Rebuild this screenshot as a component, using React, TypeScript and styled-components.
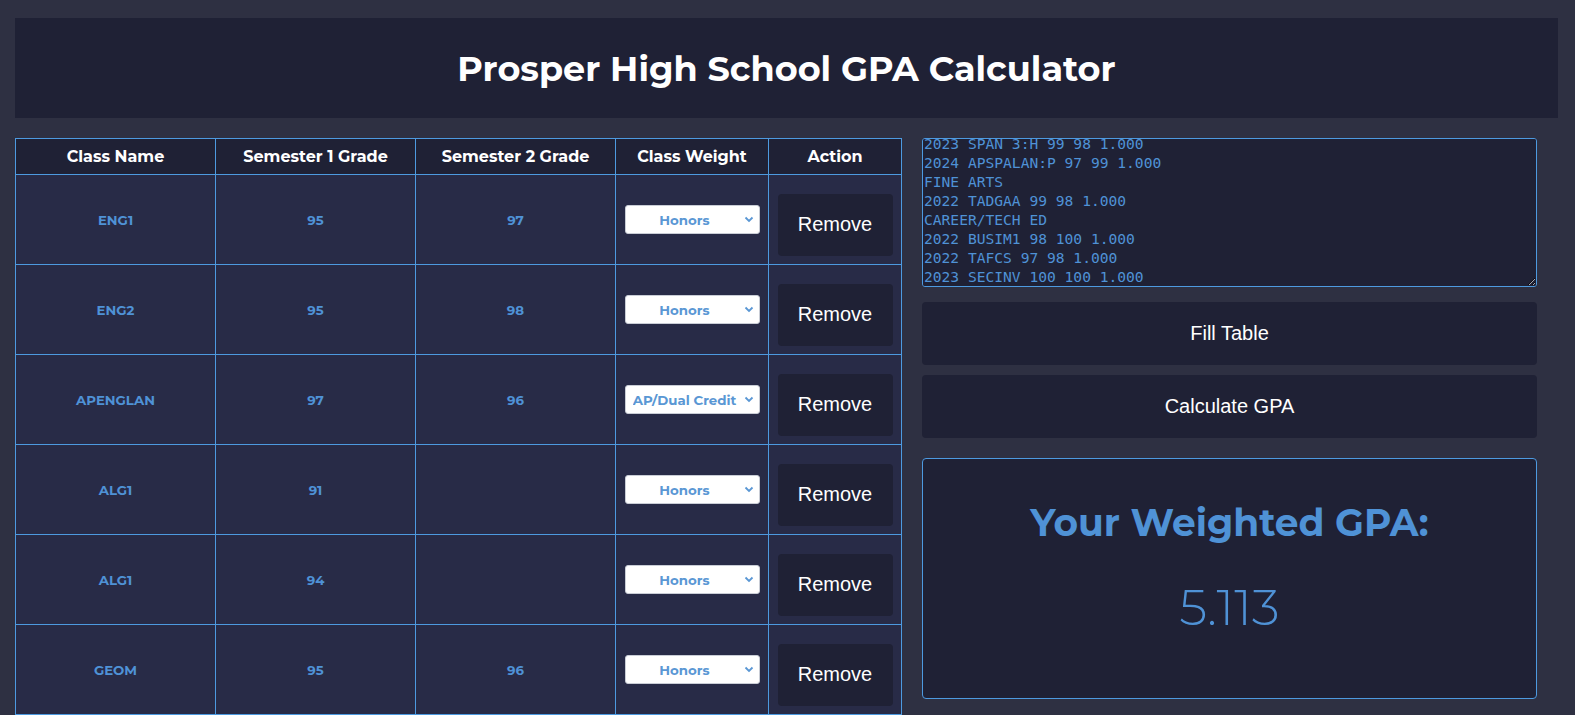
import React, { useEffect, useRef } from "react";
import styled, { createGlobalStyle } from "styled-components";

const GlobalStyle = createGlobalStyle`
  html, body {
    margin: 0;
    padding: 0;
    background: #2e3042;
    overflow: hidden;
  }
  * { box-sizing: border-box; }
`;

const SANS = `"Montserrat", Inter, "Open Sans", sans-serif`;

const Page = styled.div`
  padding: 18px 17px 0 15px;
  display: flex;
  flex-direction: column;
  gap: 20px;
  font-family: ${SANS};
`;

const Header = styled.header`
  height: 100px;
  background: #1f2135;
  display: flex;
  align-items: center;
  justify-content: center;
`;

const Title = styled.h1`
  margin: 0;
  color: #ffffff;
  font-size: 35px;
  font-weight: 700;
`;

const Main = styled.div`
  display: grid;
  grid-template-columns: 886px 615px;
  column-gap: 21px;
  align-items: start;
`;

const Table = styled.table`
  width: 886px;
  table-layout: fixed;
  border-collapse: collapse;
  border: 1px solid #4d9ae0;
`;

const HeadCell = styled.th<{ $w: number }>`
  width: ${(p) => p.$w}px;
  height: 36px;
  padding: 0;
  background: #1f2135;
  color: #ffffff;
  font-size: 16px;
  font-weight: 700;
  border: 1px solid #4d9ae0;
  text-align: center;
`;

const BodyRow = styled.tr`
  height: 90px;
  background: #282b47;
`;

const Cell = styled.td`
  padding: 0 8px;
  border: 1px solid #4d9ae0;
  text-align: center;
  color: #4f92d6;
  font-size: 13.33px;
  font-weight: 700;
`;

const SelectWrap = styled.div`
  position: relative;
  width: 135px;
  height: 29px;
  margin: 0 auto;
`;

const WeightSelect = styled.select`
  width: 100%;
  height: 100%;
  appearance: none;
  background: #ffffff;
  border: 1px solid #c9cdd6;
  border-radius: 3px;
  padding: 0 22px 0 7px;
  color: #5a97d4;
  font-family: ${SANS};
  font-size: 13.33px;
  font-weight: 700;
  text-align: center;
  text-align-last: center;
  outline: none;
`;

const Chevron = styled.svg`
  position: absolute;
  right: 6px;
  top: 11px;
  width: 10px;
  height: 7px;
  pointer-events: none;
`;

const RemoveButton = styled.button`
  width: 115px;
  height: 62px;
  margin: 10px auto 0;
  display: block;
  background: #1f2135;
  border: none;
  border-radius: 4px;
  color: #ffffff;
  font-family: "Liberation Sans", Arial, sans-serif;
  font-size: 20px;
`;

const Side = styled.div`
  display: flex;
  flex-direction: column;
`;

const Transcript = styled.textarea`
  width: 615px;
  height: 149px;
  margin: 0 0 15px 0;
  padding: 2px 4px 0 1px;
  background: #1f2135;
  border: 1px solid #4d9ae0;
  border-radius: 3px;
  color: #4f92d6;
  font-family: "DejaVu Sans Mono", "Liberation Mono", monospace;
  font-size: 14.6px;
  line-height: 19px;
  resize: vertical;
  outline: none;
  display: block;
`;

const ActionButton = styled.button`
  width: 615px;
  height: 63px;
  background: #1f2135;
  border: none;
  border-radius: 4px;
  color: #ffffff;
  font-family: "Liberation Sans", Arial, sans-serif;
  font-size: 20px;
  & + & {
    margin-top: 10px;
  }
`;

const ResultBox = styled.div`
  margin-top: 20px;
  height: 241px;
  background: #1f2135;
  border: 1px solid #4d9ae0;
  border-radius: 4px;
  display: flex;
  flex-direction: column;
  align-items: center;
  padding-top: 41px;
  gap: 32px;
`;

const ResultLabel = styled.h2`
  margin: 0;
  color: #4f92d6;
  font-size: 37.5px;
  font-weight: 700;
`;

const ResultValue = styled.div`
  color: #4f92d6;
  font-size: 50px;
  font-weight: 300;
`;

const transcript = [
  "ENGLISH",
  "2022 ENG1:H 95 97 1.000",
  "2023 ENG2:H 95 98 1.000",
  "2024 APENGLAN:P 97 96 1.000",
  "MATHEMATICS",
  "2021 ALG1:H 91 1.000",
  "2022 ALG1:H 94 1.000",
  "2022 GEOM:H 95 96 1.000",
  "LANGUAGES OTHER THAN ENGLISH",
  "2022 SPAN 2:H 98 99 1.000",
  "2023 SPAN 3:H 99 98 1.000",
  "2024 APSPALAN:P 97 99 1.000",
  "FINE ARTS",
  "2022 TADGAA 99 98 1.000",
  "CAREER/TECH ED",
  "2022 BUSIM1 98 100 1.000",
  "2022 TAFCS 97 98 1.000",
  "2023 SECINV 100 100 1.000",
].join("\n");

type Row = { name: string; s1: string; s2: string; weight: string };

const rows: Row[] = [
  { name: "ENG1", s1: "95", s2: "97", weight: "Honors" },
  { name: "ENG2", s1: "95", s2: "98", weight: "Honors" },
  { name: "APENGLAN", s1: "97", s2: "96", weight: "AP/Dual Credit" },
  { name: "ALG1", s1: "91", s2: "", weight: "Honors" },
  { name: "ALG1", s1: "94", s2: "", weight: "Honors" },
  { name: "GEOM", s1: "95", s2: "96", weight: "Honors" },
];

const columns = [
  { label: "Class Name", w: 200 },
  { label: "Semester 1 Grade", w: 200 },
  { label: "Semester 2 Grade", w: 200 },
  { label: "Class Weight", w: 153 },
  { label: "Action", w: 133 },
];

export default function App() {
  const taRef = useRef<HTMLTextAreaElement>(null);
  useEffect(() => {
    if (taRef.current) taRef.current.scrollTop = taRef.current.scrollHeight;
  }, []);

  return (
    <>
      <GlobalStyle />
      <Page>
        <Header>
          <Title>Prosper High School GPA Calculator</Title>
        </Header>
        <Main>
          <Table>
            <thead>
              <tr>
                {columns.map((c) => (
                  <HeadCell key={c.label} $w={c.w}>
                    {c.label}
                  </HeadCell>
                ))}
              </tr>
            </thead>
            <tbody>
              {rows.map((r, i) => (
                <BodyRow key={i}>
                  <Cell>{r.name}</Cell>
                  <Cell>{r.s1}</Cell>
                  <Cell>{r.s2}</Cell>
                  <Cell>
                    <SelectWrap>
                      <WeightSelect defaultValue={r.weight}>
                        <option>Regular</option>
                        <option>Honors</option>
                        <option>AP/Dual Credit</option>
                      </WeightSelect>
                      <Chevron viewBox="0 0 10 7">
                        <path d="M1.5 1.5 L5 5 L8.5 1.5" fill="none" stroke="#5a97d4" strokeWidth="1.8" />
                      </Chevron>
                    </SelectWrap>
                  </Cell>
                  <Cell>
                    <RemoveButton>Remove</RemoveButton>
                  </Cell>
                </BodyRow>
              ))}
            </tbody>
          </Table>
          <Side>
            <Transcript ref={taRef} defaultValue={transcript} spellCheck={false} />
            <ActionButton>Fill Table</ActionButton>
            <ActionButton>Calculate GPA</ActionButton>
            <ResultBox>
              <ResultLabel>Your Weighted GPA:</ResultLabel>
              <ResultValue>5.113</ResultValue>
            </ResultBox>
          </Side>
        </Main>
      </Page>
    </>
  );
}
